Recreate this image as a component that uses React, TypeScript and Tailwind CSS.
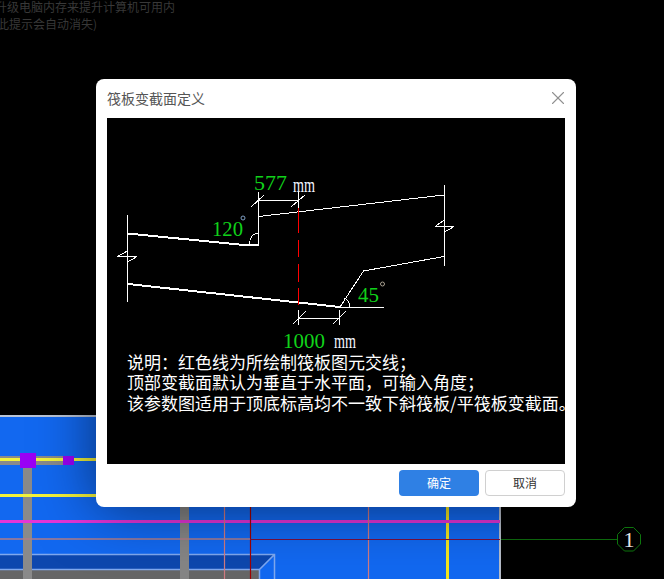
import { X } from 'lucide-react';

// CAD model peeking out behind the dialog, in page coordinates
function Scene() {
  return (
    <svg className="absolute inset-0" width={664} height={579} viewBox="0 0 664 579" fill="none">
      <rect x={0} y={416} width={500} height={163} fill="#1268f0" />
      <rect x={0} y={415} width={500} height={2} fill="#b9c4d6" />
      <rect x={499} y={416} width={2} height={163} fill="#b5bcc8" />

      {/* slab box */}
      <path d="M0 554H274L259 569H0Z" fill="#0d47ae" />
      <rect x={0} y={569} width={259} height={10} fill="#666666" />
      <path d="M0 554.5H274.5V579M0 569.5H259.5V579M259.5 569.5L274.5 554.5" stroke="#7fa8ee" strokeWidth={1.5} />

      {/* beams and columns */}
      <rect x={0} y={456} width={63} height={9} fill="#8a8a8a" />
      <rect x={23} y={465} width={9} height={114} fill="#8a8a8a" />
      <rect x={180} y={500} width={9} height={79} fill="#858585" />
      <rect x={0} y={458} width={100} height={3} fill="#f2f23c" />
      <rect x={0} y={494} width={100} height={3} fill="#f2f23c" />
      <rect x={20} y={453} width={16} height={15} fill="#9a00f5" />
      <rect x={63} y={456} width={11} height={9} fill="#9a00f5" />
      <rect x={446} y={500} width={3} height={79} fill="#f2e620" />
      <rect x={0} y={520} width={500} height={3} fill="#e535d8" />

      {/* axis lines */}
      <path d="M224.5 500V579M368.5 500V579" stroke="#d07a80" strokeWidth={1.2} />
      <path d="M250.5 500V579" stroke="#a00000" strokeWidth={1.2} />
      <path d="M0 539H250" stroke="#b07c88" strokeWidth={1.5} />
      <path d="M250 539.5H500" stroke="#7a1040" strokeWidth={1} />
      <path d="M501 539.5H617" stroke="#0d6a0d" strokeWidth={1} />

      {/* axis bubble */}
      <path
        d="M624.5 527.5L633.5 527.5L640.5 534.5V544L633.5 551H624.5L617.5 544V534.5Z"
        stroke="#0d750d"
        strokeWidth={1}
      />
      <text x={629} y={546.5} textAnchor="middle" fontSize={22} fill="#e8e8e8" fontFamily="'Liberation Serif', serif">
        1
      </text>
    </svg>
  );
}

const labelFont = "'Liberation Serif', serif";

function Label({ x, y, w, size = 20, fill = '#10d21a', children }: { x: number; y: number; w: number; size?: number; fill?: string; children: string }) {
  return (
    <text x={x} y={y} fontSize={size} fill={fill} fontFamily={labelFont} textLength={w} lengthAdjust="spacingAndGlyphs">
      {children}
    </text>
  );
}

// Section sketch, viewBox keeps page coordinates so numbers read off the screenshot
function SectionDrawing() {
  return (
    <svg className="absolute inset-0" width={458} height={346} viewBox="107 118 458 346" fill="none">
      <g stroke="#ffffff" strokeWidth={1} shapeRendering="crispEdges">
        {/* break lines */}
        <path d="M127.5 215V302M117 256.5H137M117 256.5L127.5 251M137 256.5L127.5 262" />
        <path d="M444.5 185V266M435 226.5H454M435 226.5L444.5 220M454 226.5L444.5 232" />

        {/* top edge */}
        <path d="M244 245H258.5V216.5L444 195" />
        <path d="M128 233.5L244 245H258.5" strokeWidth={2} />
        <path d="M249.5 245C249.5 239 252 233.5 258 233" />

        {/* bottom edge */}
        <path d="M128 284L340 307" strokeWidth={2} />
        <path d="M340 307.5H384M340 307L363.5 271L444 256.5" />
        <path d="M349.5 307C349.5 302 347 299 344 298" />

        {/* dimensions */}
        <path d="M258.5 192V216M298.5 192V208M258.5 200.5H298.5M251 207L264 195M291 207L305 195" />
        <path d="M298.5 310V325M339.5 310V325M298.5 318.5H339.5M293 324L306 311M333 324L346 311" />
      </g>

      <path d="M298.5 208V233M298.5 240V257M298.5 264V282M298.5 288V305" stroke="#ff0000" strokeWidth={1} shapeRendering="crispEdges" />

      <Label x={254} y={190} w={33}>577</Label>
      <Label x={293} y={192} w={22} fill="#f2f6ff">mm</Label>
      <Label x={212} y={236} w={31}>120</Label>
      <Label x={283} y={348} w={42}>1000</Label>
      <Label x={334} y={348} w={22} fill="#f2f6ff">mm</Label>
      <Label x={358} y={302} w={21}>45</Label>

      <circle cx={243} cy={218} r={2} stroke="#7f9fc4" />
      <circle cx={382.5} cy={284} r={2} stroke="#a8a090" />
    </svg>
  );
}

export default function App() {
  return (
    <div className="relative h-[579px] w-[664px] overflow-hidden bg-black font-['Noto_Sans_CJK_SC',sans-serif]">
      <Scene />

      {/* leftover hint text behind the dialog */}
      <div className="absolute left-[-5px] top-[-2px] whitespace-nowrap text-[12px] leading-[17px] text-[#383838]">
        <p>升级电脑内存来提升计算机可用内</p>
        <p className="ml-[2px]">此提示会自动消失)</p>
      </div>

      {/* Dialog */}
      <div className="absolute left-[96px] top-[79px] flex h-[428px] w-[480px] flex-col rounded-[8px] bg-white px-[11px] shadow-[0_0_60px_rgba(0,0,0,0.55)]">
        <div className="flex h-[39px] shrink-0 items-center justify-between">
          <span className="text-[14px] text-[#555555]">筏板变截面定义</span>
          <X className="mr-[-4px] mt-[-2px] h-[22px] w-[22px] text-[#909090]" strokeWidth={1.2} />
        </div>

        <div className="relative flex h-[346px] shrink-0 flex-col justify-end overflow-hidden bg-black pb-[51px] pl-[20px]">
          <SectionDrawing />
          <div className="relative whitespace-nowrap text-[17px] leading-[20.5px] text-white">
            <p>说明：红色线为所绘制筏板图元交线；</p>
            <p>顶部变截面默认为垂直于水平面，可输入角度；</p>
            <p>该参数图适用于顶底标高均不一致下斜筏板/平筏板变截面。</p>
          </div>
        </div>

        <div className="flex justify-end gap-[6px] pt-[6px]">
          <button className="h-[26px] w-[80px] rounded-[4px] bg-[#2f80e4] text-[12px] text-white">确定</button>
          <button className="h-[26px] w-[80px] rounded-[4px] border border-[#d0d0d0] bg-white text-[12px] text-[#333333]">
            取消
          </button>
        </div>
      </div>
    </div>
  );
}
